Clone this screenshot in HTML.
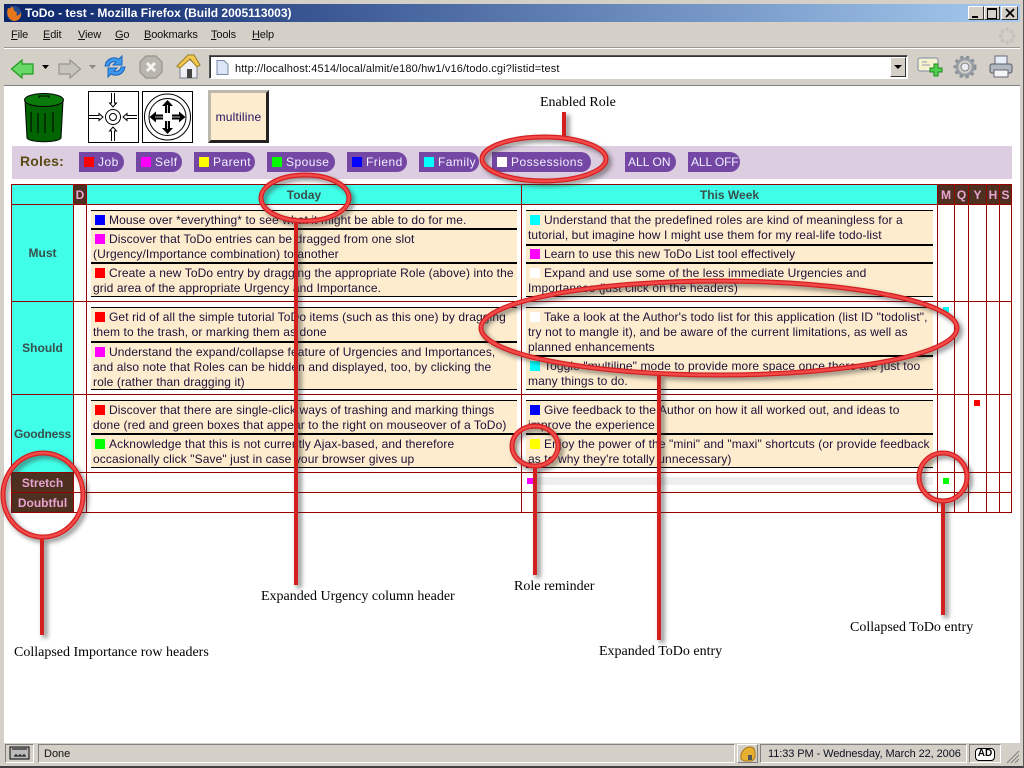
<!DOCTYPE html>
<html><head><meta charset="utf-8"><title>ToDo - test</title>
<style>
html,body{margin:0;padding:0;width:1024px;height:768px;overflow:hidden;background:#d4d0c8;font-family:"Liberation Sans",sans-serif}
div,span,svg{position:absolute}
u{text-decoration:underline}
.m{top:29px;font-size:11px;letter-spacing:-.15px;color:#111;white-space:nowrap}
.l{background:#900;}
.e{background:#fdeccd;color:#1c1038;font-size:12px;line-height:15px;white-space:nowrap;letter-spacing:.1px}
.e i{position:absolute;left:4px;width:10px;height:10px}
.e span{left:2px;top:1px}
.e span+span{top:16px}
.e span+span+span{top:31px}
.pill{top:152px;height:20px;background:#7547a5;border-radius:0 10px 10px 0;color:#f0f0ff;font-size:12px;line-height:20px;letter-spacing:.45px;white-space:nowrap}
.pill i{position:absolute;left:5px;top:5px;width:10px;height:10px}
.pill span{left:19px;top:0}
.hd{background:#4e3021;color:#e8a4d0;font-weight:bold;font-size:12px;text-align:center;line-height:20px}
.rh{background:#40ffe9;color:#37504a;font-weight:bold;font-size:12px;text-align:center}
.cap{font-family:"Liberation Serif",serif;font-size:14px;color:#000;white-space:nowrap}
</style></head><body>
<!-- window frame -->
<div style="left:0;top:0;width:1024px;height:768px;background:#d4d0c8"></div>
<div style="left:0;top:766px;width:1024px;height:2px;background:#404040"></div>
<div style="left:1023px;top:0;width:1px;height:768px;background:#555"></div>
<div style="left:4px;top:4px;width:1016px;height:18px;background:linear-gradient(90deg,#0a246a,#a6caef)"></div>
<div style="left:25px;top:5px;color:#fff;font-weight:bold;font-size:12px;line-height:16px;white-space:nowrap">ToDo - test - Mozilla Firefox (Build 2005113003)</div>
<svg style="left:5px;top:5px" width="18" height="17" viewBox="0 0 18 17"><circle cx="9" cy="8.500" r="7.500" fill="#274a8c"/><path d="M3 3 C1 8 3 15 9 16 C14 16 17 12 16 7 C15 10 13 11 11 10 C13 8 11 6 9 6 C9 4 8 2 6 1 C7 3 5 4 3 3Z" fill="#e8761a"/></svg>
<div style="left:968px;top:6px;width:16px;height:14px;background:#d4d0c8;border:1px solid;border-color:#fff #333 #333 #fff;box-sizing:border-box"><div style="left:3px;top:9px;width:6px;height:2px;background:#000"></div></div>
<div style="left:984px;top:6px;width:16px;height:14px;background:#d4d0c8;border:1px solid;border-color:#fff #333 #333 #fff;box-sizing:border-box"><div style="left:2px;top:1px;width:8px;height:8px;border:1px solid #000;border-top-width:2px"></div></div>
<div style="left:1001px;top:6px;width:17px;height:14px;background:#d4d0c8;border:1px solid;border-color:#fff #333 #333 #fff;box-sizing:border-box"><svg style="left:3px;top:1px" width="10" height="10"><path d="M1 1L9 9M9 1L1 9" stroke="#000" stroke-width="1.800"/></svg></div>
<!-- menu -->
<div style="left:4px;top:47px;width:1016px;height:1px;background:#9a9890"></div>
<div style="left:4px;top:48px;width:1016px;height:1px;background:#fff"></div>
<div class="m" style="left:11px"><u>F</u>ile</div>
<div class="m" style="left:43px"><u>E</u>dit</div>
<div class="m" style="left:78px"><u>V</u>iew</div>
<div class="m" style="left:115px"><u>G</u>o</div>
<div class="m" style="left:144px"><u>B</u>ookmarks</div>
<div class="m" style="left:211px"><u>T</u>ools</div>
<div class="m" style="left:252px"><u>H</u>elp</div>
<svg style="left:998px;top:27px" width="18" height="18"><g fill="#c4c2ba"><circle cx="9" cy="2.500" r="2"/><circle cx="9" cy="15.500" r="2"/><circle cx="2.500" cy="9" r="2"/><circle cx="15.500" cy="9" r="2"/><circle cx="4.500" cy="4.500" r="2"/><circle cx="13.500" cy="4.500" r="2"/><circle cx="4.500" cy="13.500" r="2"/><circle cx="13.500" cy="13.500" r="2"/></g></svg>
<!-- toolbar icons -->
<svg style="left:10px;top:59px" width="25" height="20"><path d="M1.500 10L12 1V5H23V15H12V19Z" fill="#68d868" stroke="#1e9a1e" stroke-width="1.200"/></svg>
<svg style="left:42px;top:65px" width="8" height="5"><path d="M0 0H7L3.500 4Z" fill="#000"/></svg>
<svg style="left:57px;top:59px" width="25" height="20"><path d="M23.500 10L13 1V5H2V15H13V19Z" fill="#c6c4bc" stroke="#96948c" stroke-width="1.200"/></svg>
<svg style="left:89px;top:65px" width="8" height="5"><path d="M0 0H7L3.500 4Z" fill="#8c8a84"/></svg>
<svg style="left:103px;top:54px" width="24" height="25"><path d="M2 12C3 5 10 2 16 5L19 2V11H10L13 8C10 7 7 8 6 12Z" fill="#3c98ea" stroke="#1c66c0"/><path d="M22 13C21 20 14 23 8 20L5 23V14H14L11 17C14 18 17 17 18 13Z" fill="#3c98ea" stroke="#1c66c0"/></svg>
<svg style="left:139px;top:55px" width="24" height="24"><path d="M7 1H17L23 7V17L17 23H7L1 17V7Z" fill="#b8b6ae" stroke="#96948c" stroke-width="1.200"/><path d="M8 8L16 16M16 8L8 16" stroke="#f4f4f0" stroke-width="3"/></svg>
<svg style="left:176px;top:54px" width="25" height="26"><path d="M4 12V24H21V12L12 4Z" fill="#f0f0f4" stroke="#7a8090"/><rect x="11" y="15" width="5" height="9" fill="#444"/><path d="M1 12L12 1H18L24 11L21 13L14 5L4 14Z" fill="#f0c850" stroke="#9a7a20"/></svg>
<div style="left:209px;top:55px;width:699px;height:24px;background:#fff;border:1px solid;border-color:#555 #fff #fff #555;box-shadow:inset 1px 1px 0 #333;box-sizing:border-box"></div>
<svg style="left:216px;top:60px" width="13" height="15"><path d="M1 .5H8L12 4.500V14.500H1Z" fill="#dce6f6" stroke="#7a8aa8"/></svg>
<div style="left:235px;top:62px;font-size:11px;color:#111;line-height:14px;white-space:nowrap;letter-spacing:.13px">http://localhost:4514/local/almit/e180/hw1/v16/todo.cgi?listid=test</div>
<div style="left:890px;top:57px;width:16px;height:20px;background:#d4d0c8;border:1px solid;border-color:#fff #333 #333 #fff;box-sizing:border-box"><svg style="left:3px;top:7px" width="9" height="5"><path d="M0 0H8L4 4Z" fill="#000"/></svg></div>
<svg style="left:917px;top:56px" width="26" height="22"><rect x="1" y="2" width="20" height="13" rx="2" fill="#f6f2d0" stroke="#7a8aa8"/><path d="M5 6h5M5 9h8" stroke="#99a"/><path d="M17 8h4v4h4v4h-4v4h-4v-4h-4v-4h4Z" fill="#50d050" stroke="#1a8a1a"/></svg>
<svg style="left:953px;top:55px" width="24" height="24"><circle cx="12" cy="12" r="8" fill="none" stroke="#9aa0a8" stroke-width="3"/><circle cx="12" cy="12" r="10" fill="none" stroke="#8a9098" stroke-width="3" stroke-dasharray="3 3"/><circle cx="12" cy="12" r="4" fill="#e8eaee" stroke="#7a8088"/></svg>
<svg style="left:989px;top:55px" width="24" height="24"><rect x="6" y="1" width="12" height="8" fill="#e8eef8" stroke="#667"/><rect x="1" y="9" width="22" height="9" rx="2" fill="#b4b8c0" stroke="#555c68"/><rect x="5" y="15" width="14" height="7" fill="#f4f4f4" stroke="#667"/></svg>
<div style="left:4px;top:85px;width:1016px;height:1px;background:#808080"></div>
<!-- content -->
<div style="left:4px;top:86px;width:1016px;height:656px;background:#fff"></div>

<!-- trash -->
<svg style="left:23px;top:92px" width="42" height="51"><path d="M2 9L4 46C6 51 36 51 38 46L40 9Z" fill="#006400" stroke="#000"/><ellipse cx="21" cy="8" rx="19.500" ry="6.500" fill="#0a7a0a" stroke="#000"/><path d="M8 20V40M15 21V41M22 21V41M30 20V40" stroke="#000"/><path d="M16 6V4H26V6" fill="none" stroke="#000"/></svg>
<!-- collapse -->
<svg style="left:88px;top:91px" width="52" height="52"><rect x=".5" y=".5" width="50" height="51" fill="#fff" stroke="#000"/><circle cx="25" cy="26" r="7.500" fill="none" stroke="#000"/><circle cx="25" cy="26" r="3.500" fill="none" stroke="#000"/><path d="M23.500 2V12H21.500L25 16L28.500 12H26.500V2M23.500 50V40H21.500L25 36L28.500 40H26.500V50M1 24.500H11V22.500L15 26L11 29.500V27.500H1M49 24.500H39V22.500L35 26L39 29.500V27.500H49" fill="none" stroke="#000"/></svg>
<!-- expand -->
<svg style="left:142px;top:91px" width="52" height="52"><rect x=".5" y=".5" width="50" height="51" fill="#fff" stroke="#000"/><circle cx="25.500" cy="26" r="23" fill="none" stroke="#000"/><circle cx="25.500" cy="26" r="18.500" fill="none" stroke="#000"/><path d="M25.500 9L20 15H23V22H28V15H31ZM25.500 43L20 37H23V30H28V37H31ZM7.500 26L14 20.500V23.500H21V28.500H14V31.500ZM43.500 26L37 20.500V23.500H30V28.500H37V31.500Z" fill="#000"/><path d="M25.500 14V22M25.500 30V38M13 26H21M30 26H38" stroke="#fff" stroke-width=".8"/></svg>
<!-- multiline -->
<div style="left:208px;top:90px;width:61px;height:53px;box-sizing:border-box;background:#fdeccd;border:3px solid;border-color:#bcb8ae #222 #222 #bcb8ae;color:#201060;font-size:12px;letter-spacing:.2px;line-height:49px;text-align:center">multiline</div>

<!-- roles -->
<div style="left:12px;top:146px;width:1000px;height:33px;background:#dccde0"></div>
<div style="left:20px;top:153px;font-size:14px;font-weight:bold;color:#5a4a14;letter-spacing:.2px;line-height:16px">Roles:</div>
<div class="pill" style="left:79px;width:45px"><i style="background:#f00"></i><span>Job</span></div>
<div class="pill" style="left:136px;width:46px"><i style="background:#f0f"></i><span>Self</span></div>
<div class="pill" style="left:194px;width:61px"><i style="background:#ff0"></i><span>Parent</span></div>
<div class="pill" style="left:267px;width:68px"><i style="background:#0f0"></i><span>Spouse</span></div>
<div class="pill" style="left:347px;width:60px"><i style="background:#00f"></i><span>Friend</span></div>
<div class="pill" style="left:419px;width:60px"><i style="background:#0ff"></i><span>Family</span></div>
<div class="pill" style="left:492px;width:99px"><i style="background:#fff"></i><span>Possessions</span></div>
<div class="pill" style="left:625px;width:51px;letter-spacing:.05px"><span style="left:3px">ALL ON</span></div>
<div class="pill" style="left:688px;width:52px;letter-spacing:-.1px"><span style="left:3px">ALL OFF</span></div>

<!-- grid fills -->
<div style="left:12px;top:185px;width:925px;height:19px;background:#40ffe9"></div>
<div class="hd" style="left:74px;top:185px;width:12px;height:19px">D</div>
<div style="left:87px;top:188px;width:434px;text-align:center;font-size:12px;font-weight:bold;color:#37504a;line-height:15px">Today</div>
<div style="left:522px;top:188px;width:415px;text-align:center;font-size:12px;font-weight:bold;color:#37504a;line-height:15px">This Week</div>
<div class="hd" style="left:938px;top:185px;width:16px;height:19px">M</div>
<div class="hd" style="left:955px;top:185px;width:13px;height:19px">Q</div>
<div class="hd" style="left:969px;top:185px;width:17px;height:19px">Y</div>
<div class="hd" style="left:987px;top:185px;width:12px;height:19px">H</div>
<div class="hd" style="left:1000px;top:185px;width:11px;height:19px">S</div>
<div class="rh" style="left:12px;top:205px;width:61px;height:96px;line-height:96px">Must</div>
<div class="rh" style="left:12px;top:302px;width:61px;height:92px;line-height:92px">Should</div>
<div class="rh" style="left:12px;top:395px;width:61px;height:77px;line-height:79px;letter-spacing:-.2px">Goodness</div>
<div class="hd" style="left:12px;top:473px;width:61px;height:19px;line-height:20px">Stretch</div>
<div class="hd" style="left:12px;top:493px;width:61px;height:19px;line-height:20px">Doubtful</div>
<!-- grid lines -->
<div class="l" style="left:11px;top:184px;width:1px;height:329px"></div>
<div class="l" style="left:73px;top:184px;width:1px;height:329px"></div>
<div class="l" style="left:86px;top:184px;width:1px;height:329px"></div>
<div class="l" style="left:521px;top:184px;width:1px;height:329px"></div>
<div class="l" style="left:937px;top:184px;width:1px;height:329px"></div>
<div class="l" style="left:954px;top:184px;width:1px;height:329px"></div>
<div class="l" style="left:968px;top:184px;width:1px;height:329px"></div>
<div class="l" style="left:986px;top:184px;width:1px;height:329px"></div>
<div class="l" style="left:999px;top:184px;width:1px;height:329px"></div>
<div class="l" style="left:1011px;top:184px;width:1px;height:329px"></div>
<div class="l" style="left:11px;top:184px;width:1001px;height:1px"></div>
<div class="l" style="left:11px;top:204px;width:1001px;height:1px"></div>
<div class="l" style="left:11px;top:301px;width:1001px;height:1px"></div>
<div class="l" style="left:11px;top:394px;width:1001px;height:1px"></div>
<div class="l" style="left:11px;top:472px;width:1001px;height:1px"></div>
<div class="l" style="left:11px;top:492px;width:1001px;height:1px"></div>
<div class="l" style="left:11px;top:512px;width:1001px;height:1px"></div>

<!-- Today entries -->
<div class="e" style="left:91px;top:210px;width:426px;height:87px"></div>
<div style="left:91px;top:210px;width:426px;height:1px;background:#000"></div>
<div style="left:91px;top:228px;width:426px;height:2px;background:#000"></div>
<div style="left:91px;top:262px;width:426px;height:2px;background:#000"></div>
<div style="left:91px;top:296px;width:426px;height:1px;background:#000"></div>
<div class="e" style="left:91px;top:212px;width:426px;background:none;height:15px"><i style="top:3px;background:#00f"></i><span style="left:18px">Mouse over *everything* to see what it might be able to do for me.</span></div>
<div class="e" style="left:91px;top:231px;width:426px;background:none;height:30px"><i style="top:3px;background:#f0f"></i><span style="left:18px">Discover that ToDo entries can be dragged from one slot</span><span>(Urgency/Importance combination) to another</span></div>
<div class="e" style="left:91px;top:265px;width:426px;background:none;height:30px"><i style="top:3px;background:#f00"></i><span style="left:18px">Create a new ToDo entry by dragging the appropriate Role (above) into the</span><span>grid area of the appropriate Urgency and Importance.</span></div>

<div class="e" style="left:91px;top:307px;width:426px;height:83px"></div>
<div style="left:91px;top:307px;width:426px;height:1px;background:#000"></div>
<div style="left:91px;top:341px;width:426px;height:2px;background:#000"></div>
<div style="left:91px;top:389px;width:426px;height:1px;background:#000"></div>
<div class="e" style="left:91px;top:309px;width:426px;background:none;height:30px"><i style="top:3px;background:#f00"></i><span style="left:18px">Get rid of all the simple tutorial ToDo items (such as this one) by dragging</span><span>them to the trash, or marking them as done</span></div>
<div class="e" style="left:91px;top:344px;width:426px;background:none;height:45px"><i style="top:3px;background:#f0f"></i><span style="left:18px">Understand the expand/collapse feature of Urgencies and Importances,</span><span>and also note that Roles can be hidden and displayed, too, by clicking the</span><span>role (rather than dragging it)</span></div>

<div class="e" style="left:91px;top:400px;width:426px;height:68px"></div>
<div style="left:91px;top:400px;width:426px;height:1px;background:#000"></div>
<div style="left:91px;top:433px;width:426px;height:2px;background:#000"></div>
<div style="left:91px;top:467px;width:426px;height:1px;background:#000"></div>
<div class="e" style="left:91px;top:402px;width:426px;background:none;height:30px"><i style="top:3px;background:#f00"></i><span style="left:18px">Discover that there are single-click ways of trashing and marking things</span><span>done (red and green boxes that appear to the right on mouseover of a ToDo)</span></div>
<div class="e" style="left:91px;top:436px;width:426px;background:none;height:30px"><i style="top:3px;background:#0f0"></i><span style="left:18px">Acknowledge that this is not currently Ajax-based, and therefore</span><span>occasionally click "Save" just in case your browser gives up</span></div>

<!-- Week entries -->
<div class="e" style="left:526px;top:210px;width:407px;height:87px"></div>
<div style="left:526px;top:210px;width:407px;height:1px;background:#000"></div>
<div style="left:526px;top:244px;width:407px;height:2px;background:#000"></div>
<div style="left:526px;top:262px;width:407px;height:2px;background:#000"></div>
<div style="left:526px;top:296px;width:407px;height:1px;background:#000"></div>
<div class="e" style="left:526px;top:212px;width:407px;background:none;height:30px"><i style="top:3px;background:#0ff"></i><span style="left:18px">Understand that the predefined roles are kind of meaningless for a</span><span>tutorial, but imagine how I might use them for my real-life todo-list</span></div>
<div class="e" style="left:526px;top:246px;width:407px;background:none;height:15px"><i style="top:3px;background:#f0f"></i><span style="left:18px">Learn to use this new ToDo List tool effectively</span></div>
<div class="e" style="left:526px;top:265px;width:407px;background:none;height:30px"><i style="top:3px;background:#fff"></i><span style="left:18px">Expand and use some of the less immediate Urgencies and</span><span>Importances (just click on the headers)</span></div>

<div class="e" style="left:526px;top:307px;width:407px;height:83px"></div>
<div style="left:526px;top:307px;width:407px;height:1px;background:#000"></div>
<div style="left:526px;top:355px;width:407px;height:2px;background:#000"></div>
<div style="left:526px;top:389px;width:407px;height:1px;background:#000"></div>
<div class="e" style="left:526px;top:309px;width:407px;background:none;height:45px"><i style="top:3px;background:#fff"></i><span style="left:18px">Take a look at the Author's todo list for this application (list ID "todolist",</span><span>try not to mangle it), and be aware of the current limitations, as well as</span><span>planned enhancements</span></div>
<div class="e" style="left:526px;top:358px;width:407px;background:none;height:30px"><i style="top:3px;background:#0ff"></i><span style="left:18px">Toggle "multiline" mode to provide more space once there are just too</span><span>many things to do.</span></div>

<div class="e" style="left:526px;top:400px;width:407px;height:68px"></div>
<div style="left:526px;top:400px;width:407px;height:1px;background:#000"></div>
<div style="left:526px;top:433px;width:407px;height:2px;background:#000"></div>
<div style="left:526px;top:467px;width:407px;height:1px;background:#000"></div>
<div class="e" style="left:526px;top:402px;width:407px;background:none;height:30px"><i style="top:3px;background:#00f"></i><span style="left:18px">Give feedback to the Author on how it all worked out, and ideas to</span><span>improve the experience</span></div>
<div class="e" style="left:526px;top:436px;width:407px;background:none;height:30px"><i style="top:3px;background:#ff0"></i><span style="left:18px">Enjoy the power of the "mini" and "maxi" shortcuts (or provide feedback</span><span>as to why they're totally unnecessary)</span></div>

<!-- collapsed -->
<div style="left:533px;top:477px;width:400px;height:8px;background:#eee"></div>
<div style="left:527px;top:478px;width:6px;height:6px;background:#f0f"></div>
<div style="left:943px;top:478px;width:6px;height:6px;background:#0f0"></div>
<div style="left:943px;top:307px;width:6px;height:6px;background:#0ff"></div>
<div style="left:974px;top:400px;width:6px;height:6px;background:#f00"></div>

<!-- callouts -->
<svg style="left:0;top:86px" width="1024" height="656" viewBox="0 86 1024 656">
<defs><filter id="b" x="-20%" y="-20%" width="140%" height="140%"><feGaussianBlur stdDeviation="2.500"/></filter></defs>
<g fill="none" stroke="#333" stroke-width="5" opacity=".55" filter="url(#b)" transform="translate(3,3)">
<ellipse cx="305" cy="198" rx="44" ry="23"/><ellipse cx="544" cy="159" rx="62" ry="22"/><ellipse cx="719" cy="328" rx="238" ry="47"/><ellipse cx="535" cy="446" rx="23" ry="20"/><ellipse cx="943" cy="477" rx="24" ry="24"/><ellipse cx="43" cy="495" rx="40" ry="42"/>
<path d="M296 221V585M564 112V137M659 375V640M535 466V575M943 501V615M42 537V635"/>
</g>
<g fill="none" stroke="#d41f1f" stroke-width="5">
<ellipse cx="305" cy="198" rx="44" ry="23"/><ellipse cx="544" cy="159" rx="62" ry="22"/><ellipse cx="719" cy="328" rx="238" ry="47"/><ellipse cx="535" cy="446" rx="23" ry="20"/><ellipse cx="943" cy="477" rx="24" ry="24"/><ellipse cx="43" cy="495" rx="40" ry="42"/>
<path d="M296 221V585M564 112V137M659 375V640M535 466V575M943 501V615M42 537V635" stroke-width="4"/>
</g>
<g fill="none" stroke="#f24a4a" stroke-width="2.500">
<ellipse cx="305" cy="198" rx="44" ry="23"/><ellipse cx="544" cy="159" rx="62" ry="22"/><ellipse cx="719" cy="328" rx="238" ry="47"/><ellipse cx="535" cy="446" rx="23" ry="20"/><ellipse cx="943" cy="477" rx="24" ry="24"/><ellipse cx="43" cy="495" rx="40" ry="42"/>
</g>
</svg>
<div class="cap" style="left:540px;top:95px">Enabled Role</div>
<div class="cap" style="left:261px;top:589px">Expanded Urgency column header</div>
<div class="cap" style="left:514px;top:579px">Role reminder</div>
<div class="cap" style="left:850px;top:620px">Collapsed ToDo entry</div>
<div class="cap" style="left:599px;top:644px">Expanded ToDo entry</div>
<div class="cap" style="left:14px;top:645px">Collapsed Importance row headers</div>

<!-- status bar -->
<div style="left:4px;top:742px;width:1016px;height:1px;background:#fff"></div>
<div style="left:5px;top:744px;width:29px;height:19px;box-sizing:border-box;border:1px solid;border-color:#808080 #fff #fff #808080"></div>
<svg style="left:9px;top:746px" width="22" height="15"><rect x="1" y="1" width="19" height="12" fill="#bbb" stroke="#000"/><path d="M3 3H18M5 10H17M7 8V10M11 8V10M15 8V10" stroke="#000" fill="none"/></svg>
<div style="left:38px;top:744px;width:697px;height:19px;box-sizing:border-box;border:1px solid;border-color:#808080 #fff #fff #808080"></div>
<div style="left:44px;top:747px;font-size:11px;line-height:14px;color:#111">Done</div>
<div style="left:737px;top:744px;width:21px;height:19px;box-sizing:border-box;border:1px solid;border-color:#fff #808080 #808080 #fff"></div>
<svg style="left:740px;top:746px" width="16" height="16"><path d="M1 13C0 6 5 1 10 1C14 1 15 4 15 7L15 12L12 15H4Z" fill="#e8b030" stroke="#a87818"/><path d="M8 9h4v5H8Z" fill="#555"/></svg>
<div style="left:760px;top:744px;width:207px;height:19px;box-sizing:border-box;border:1px solid;border-color:#808080 #fff #fff #808080"></div>
<div style="left:768px;top:747px;font-size:11px;letter-spacing:-.08px;line-height:14px;color:#112;white-space:nowrap">11:33 PM - Wednesday, March 22, 2006</div>
<div style="left:969px;top:744px;width:32px;height:19px;box-sizing:border-box;border:1px solid;border-color:#808080 #fff #fff #808080"></div>
<div style="left:975px;top:748px;width:20px;height:13px;box-sizing:border-box;border:1.500px solid #000;border-radius:4px;background:#fff;font-size:10px;font-weight:bold;line-height:10px;text-align:center;color:#000">AD</div>
<svg style="left:1006px;top:750px" width="14" height="14"><path d="M13 1L1 13M13 5L5 13M13 9L9 13" stroke="#808080" fill="none"/></svg>
</body></html>
